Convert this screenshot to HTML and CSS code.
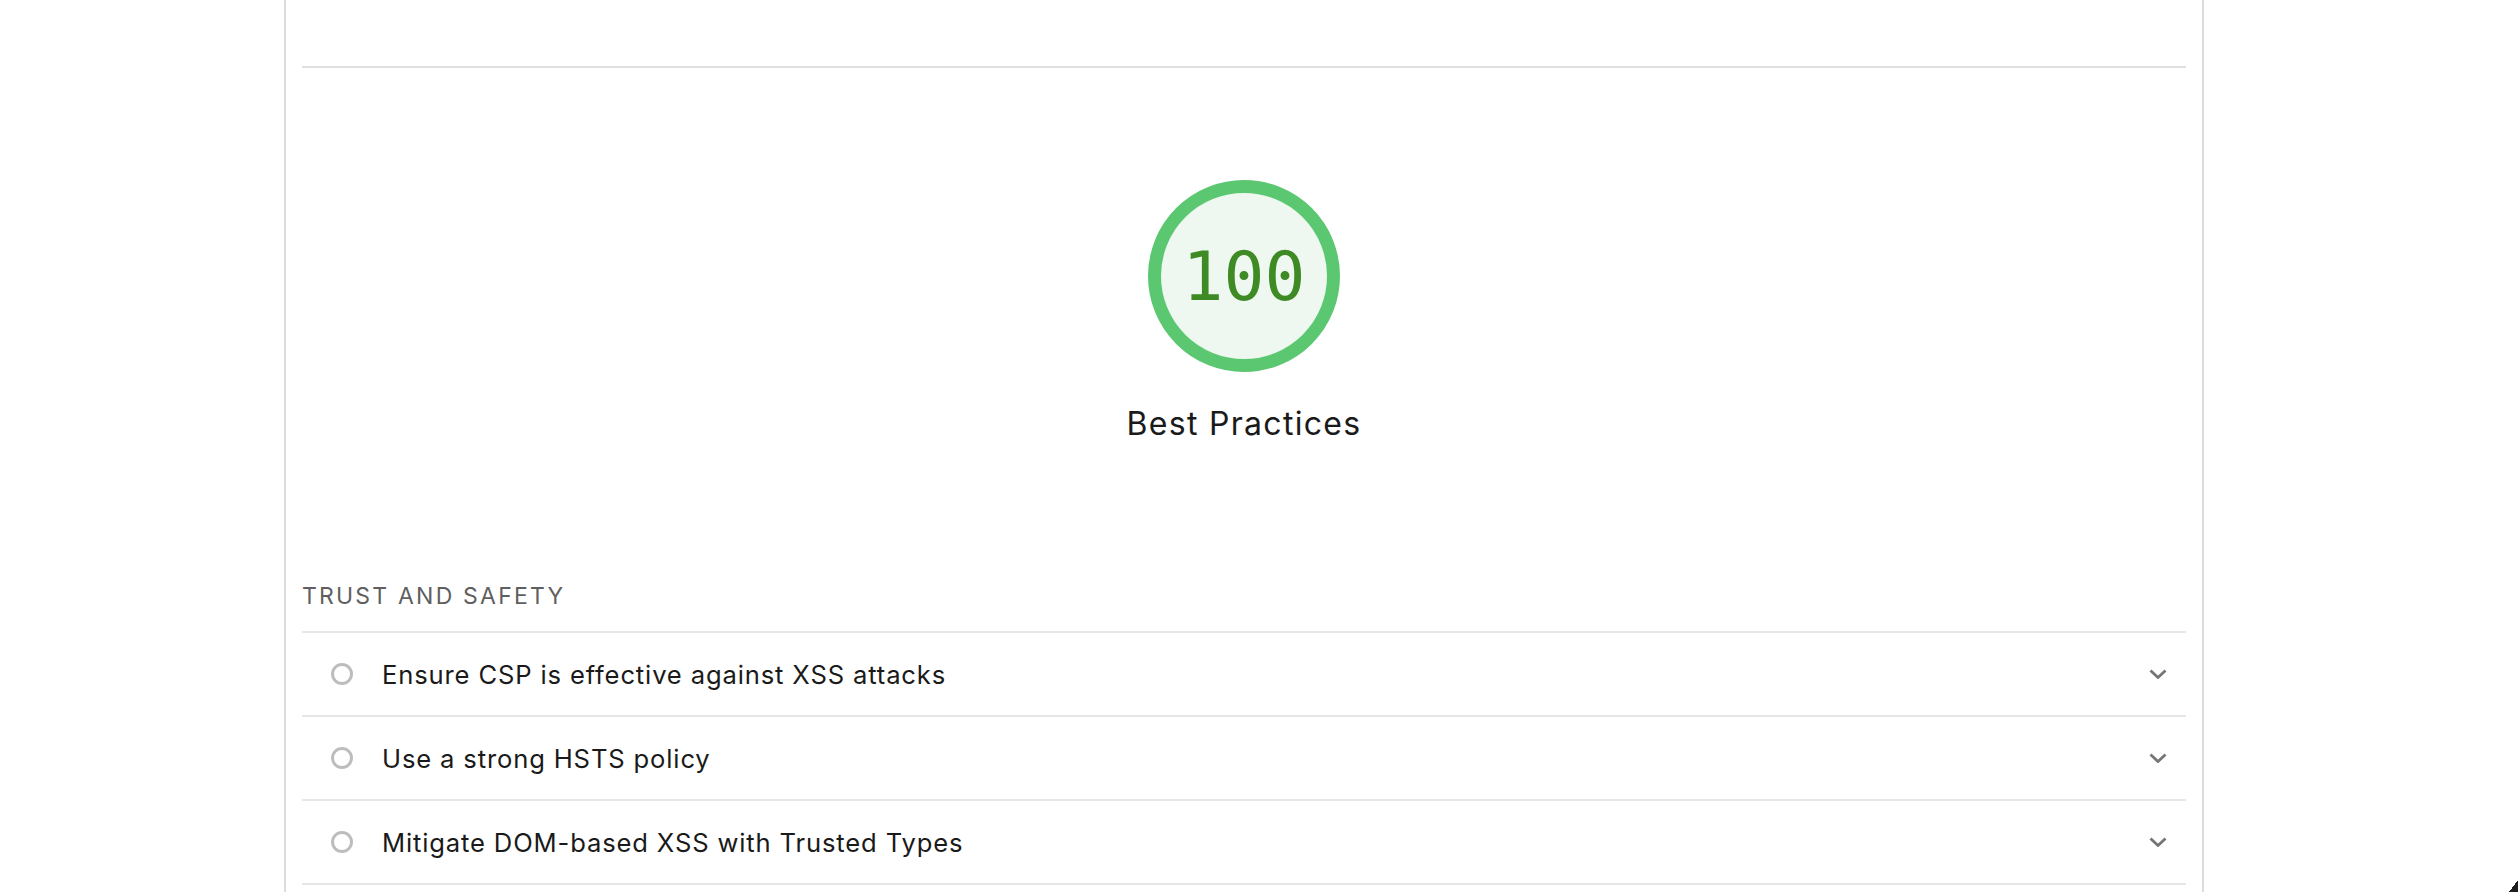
FILE: index.html
```html
<!DOCTYPE html>
<html lang="en">
<head>
<meta charset="utf-8">
<title>Best Practices</title>
<link rel="stylesheet" href="styles.css">
</head>
<body>
<div class="report">
  <div class="top-space"></div>
  <section class="category">
    <div class="score-header">
      <div class="gauge">
        <span class="gauge-value">100</span>
      </div>
      <div class="gauge-label">Best Practices</div>
    </div>
    <div class="group">
      <div class="group-title">Trust and Safety</div>
      <div class="audit">
        <span class="audit-icon"></span>
        <span class="audit-title">Ensure CSP is effective against XSS attacks</span>
        <svg class="chevron" width="18" height="10" viewBox="0 0 18 10"><polyline points="1.5,1.5 9,8.5 16.5,1.5" fill="none" stroke="#757575" stroke-width="2.8"/></svg>
      </div>
      <div class="audit">
        <span class="audit-icon"></span>
        <span class="audit-title">Use a strong HSTS policy</span>
        <svg class="chevron" width="18" height="10" viewBox="0 0 18 10"><polyline points="1.5,1.5 9,8.5 16.5,1.5" fill="none" stroke="#757575" stroke-width="2.8"/></svg>
      </div>
      <div class="audit">
        <span class="audit-icon"></span>
        <span class="audit-title">Mitigate DOM-based XSS with Trusted Types</span>
        <svg class="chevron" width="18" height="10" viewBox="0 0 18 10"><polyline points="1.5,1.5 9,8.5 16.5,1.5" fill="none" stroke="#757575" stroke-width="2.8"/></svg>
      </div>
    </div>
  </section>
</div>
<div class="window-corner"></div>
</body>
</html>
```

FILE: styles.css
```css
html, body {
  margin: 0;
  padding: 0;
  background: #ffffff;
}

body {
  font-family: Inter, "Noto Sans", "Liberation Sans", sans-serif;
  color: #1a1a1a;
  height: 892px;
  overflow: hidden;
}

.report {
  box-sizing: border-box;
  margin-left: 284px;
  width: 1920px;
  min-height: 892px;
  border-left: 2px solid #dcdce0;
  border-right: 2px solid #dcdce0;
  padding: 0 16px;
}

.top-space {
  height: 66px;
}

.category {
  border-top: 2px solid #e0e0e0;
}

.score-header {
  display: flex;
  flex-direction: column;
  align-items: center;
  padding-top: 112px;
}

.gauge {
  box-sizing: border-box;
  width: 192px;
  height: 192px;
  border-radius: 50%;
  border: 13px solid #5bc871;
  background: #eef8f0;
  display: flex;
  align-items: center;
  justify-content: center;
}

.gauge-value {
  font-family: "DejaVu Sans Mono", "Liberation Mono", monospace;
  font-size: 68px;
  line-height: 1;
  color: #3e8a25;
  margin-top: 2px;
}

.gauge-label {
  margin-top: 32px;
  font-size: 32px;
  line-height: 40px;
  letter-spacing: 1.3px;
  color: #1a1a1a;
}

.group {
  margin-top: 136px;
}

.group-title {
  font-size: 23px;
  line-height: 32px;
  letter-spacing: 2.2px;
  text-transform: uppercase;
  color: #5f5f5f;
  padding-bottom: 19px;
  border-bottom: 2px solid #e6e6e6;
}

.audit {
  display: flex;
  align-items: center;
  height: 82px;
  border-bottom: 2px solid #e6e6e6;
  padding: 0 19px 0 29px;
}

.audit-icon {
  box-sizing: border-box;
  width: 22px;
  height: 22px;
  border-radius: 50%;
  border: 3.5px solid #bdbdbd;
  flex: none;
}

.audit-title {
  margin-left: 29px;
  font-size: 25.6px;
  letter-spacing: 0.85px;
  color: #1a1a1a;
  flex: 1;
}

.chevron {
  flex: none;
}

.window-corner {
  position: fixed;
  right: 0;
  bottom: 0;
  width: 9px;
  height: 12px;
  background: linear-gradient(to bottom right, transparent 50%, #1f1f1f 50%);
}
```
